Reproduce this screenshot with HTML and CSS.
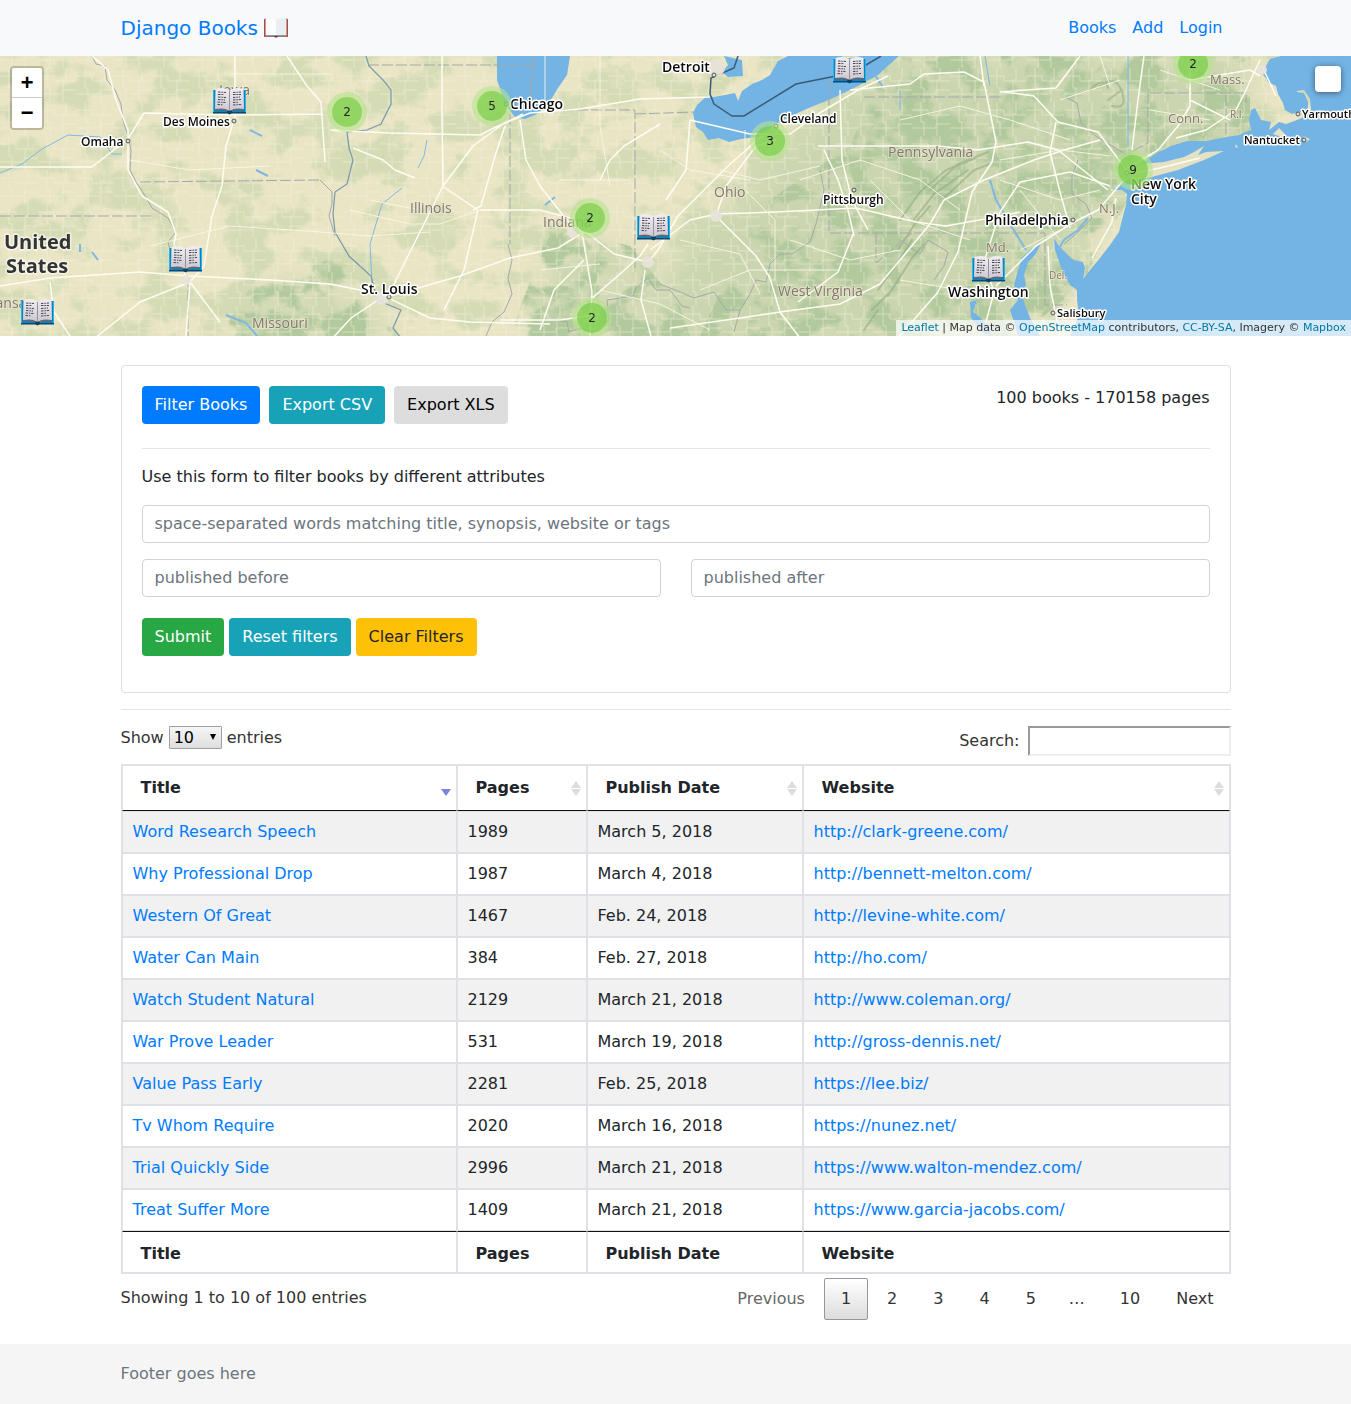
FILE: index.html
```html
<!DOCTYPE html>
<html lang="en">
<head>
<meta charset="utf-8">
<meta name="viewport" content="width=device-width, initial-scale=1">
<title>Django Books</title>
<link rel="stylesheet" href="styles.css">
</head>
<body>
<header class="navbar">
  <div class="container navbar-inner">
    <a class="brand" href="#">Django Books
      <svg class="brand-icon" viewBox="0 0 24 20" aria-hidden="true">
        <path d="M0 1h2v16h20V1h2v18H0z" fill="#c5413c"/>
        <path d="M1 17h22v1.500H1z" fill="#8b989b"/>
        <path d="M1.500 0C5 1 9 0 12 1.500V17H2z" fill="#fcfcfc"/>
        <path d="M22.500 0C19 1 15 0 12 1.500V17h10z" fill="#e9eef0"/>
        <path d="M1.500 0v17M22.500 0v17" stroke="#a5afb2" stroke-width=".8"/>
        <path d="M10 18h4l-1 1.500h-2z" fill="#3d4c52"/>
      </svg></a>
    <nav class="nav-links">
      <a href="#">Books</a>
      <a href="#">Add</a>
      <a href="#">Login</a>
    </nav>
  </div>
</header>

<section class="map" aria-label="Map of publishers">
  <svg class="map-canvas" viewBox="0 56 1351 280" preserveAspectRatio="xMidYMid slice">
    <defs>
      <filter id="patches" x="0" y="0" width="100%" height="100%" color-interpolation-filters="sRGB">
        <feTurbulence type="fractalNoise" baseFrequency="0.022 0.028" numOctaves="5" seed="8"/>
        <feColorMatrix values="0 0 0 0 .83  0 0 0 0 .86  0 0 0 0 .71  7 0 0 0 -3.300"/>
      </filter>
      <filter id="hills" x="0" y="0" width="100%" height="100%" color-interpolation-filters="sRGB">
        <feTurbulence type="fractalNoise" baseFrequency="0.03 0.035" numOctaves="5" seed="21" result="n"/>
        <feColorMatrix in="n" values="0 0 0 0 .7  0 0 0 0 .79  0 0 0 0 .62  0 7 0 0 -3.200" result="c"/>
        <feComposite in="c" in2="SourceGraphic" operator="in"/>
      </filter>
      <filter id="soft" x="-20%" y="-20%" width="140%" height="140%"><feGaussianBlur stdDeviation="14"/></filter>
      <pattern id="grid" width="38" height="34" patternUnits="userSpaceOnUse">
        <path d="M0 8h16v5h22M0 26h24v-4h14M9 0v20h3v14M28 0v12h-3v22" fill="none" stroke="#f6f2df" stroke-width="1"/>
      </pattern>
      <linearGradient id="page" x2="0" y2="1">
        <stop offset="0" stop-color="#f0eef3"/><stop offset="1" stop-color="#cdc9d3"/>
      </linearGradient>
      <symbol id="book" viewBox="0 0 33 26" overflow="visible">
        <path d="M0 2h4v20h25V2h4v23H0z" fill="#0b83be"/>
        <path d="M0 2h1v22H0zM32 2h1v22h-1z" fill="#2bb4e8"/>
        <path d="M0 24h33v1.500H0z" fill="#064974"/>
        <path d="M2 20.500c5-1 10-1 14.500 2 4.500-3 9.500-3 14.500-2v2c-5-.5-10-.5-14.500 1.500-4.500-2-9.500-2-14.500-1.500z" fill="#6c6470"/>
        <path d="M2.500 1C8-.5 13-.5 16.500 3v19.500C12 20 7 20 2 21z" fill="url(#page)"/>
        <path d="M30.500 1C25-.5 20-.5 16.500 3v19.500C21 20 26 20 31 21z" fill="url(#page)"/>
        <path d="M16.500 3v19" stroke="#97919d" stroke-width="1"/>
        <path d="M5 4l8 .5M5 6.500h6M5 9l8 .5M5 11.500l7 .5M4.500 14l8 .5M4.500 16.500l5 .3M20 4.500l8-.5M20 6.500h8M20 9.500l7-.5M20 12l8-.5M20 14.500l5-.3M20 17l8-.5" fill="none" stroke="#4a4650" stroke-width="1" stroke-dasharray="2.500 .9 1.500 .8"/>
        <path d="M14 23h5v2l-2.500 1.500L14 25z" fill="#054565"/>
      </symbol>
    </defs>

    <rect y="56" width="1351" height="280" fill="#eae5c5"/>
    <rect y="56" width="1351" height="280" filter="url(#patches)"/>
    <g fill="#cbd6b0" filter="url(#soft)">
      <path d="M790 136l90-80h370v110l-130 30-60 80-50 70H650l20-90 70-60z"/>
      <path d="M525 336l30-100 60 10 50 50v50z" opacity=".7"/>
      <path d="M220 336l60-60 90 20 30 50z" opacity=".7"/>
    </g>
    <g filter="url(#hills)">
      <path d="M700 336l60-130 90-60 40-90h360v110l-120 30-50 90-60 50zM510 336l40-110 80 20 50 60 10 30zM220 336l30-50 90-30 60 80z" fill="#000"/>
    </g>
    <rect y="56" width="1280" height="280" fill="url(#grid)" opacity=".5"/>

    <!-- ridges of the Appalachians -->
    <g fill="none" stroke="#96ad86" stroke-width="2" opacity=".65" stroke-linecap="round">
      <path d="M878 290l20-28 14-22M888 296l24-38 12-14M872 310l18-18M900 220l20-28 26-22 30-12M912 222l22-28 34-24M930 190l28-26 30-12M944 198l30-28 16-6M898 250l18-28 14-16M864 330l14-20M1100 86q16-12 22 6t-10 14M1090 90q14-14 18-2M1108 100l14-10"/>
    </g>

    <!-- water -->
    <g fill="#73b4e5">
      <path d="M497 56v24l5 15 6 13 7 9 10 2 10-4 10-7 7-10 6-10 9-13 3-19z"/>
      <path d="M693 113l4-8 10-9 7 1 11-2 10-2 3 8 4-10 10-7 10-4 8-5 8-14 12-6h50l6 4 20-4h34l-22 20-22 12-25 12-20 8-20 9-15 8-10 7-10 6-15 2-12 3-10-4-11 2-5-8-7-5z"/>
      <path d="M724 56l18 4 1 16-15 1-6-5 6-7z"/>
      <path d="M1281 56l-11 3-4 7-4 8 4 4 2 4 8 4 2 8 5 9 2 7 7 4 8-2 8-1v-9l-4-9-7-1v-1l7-1 6 9 1 11-5 6-9 4-11 4-7-2-10 8 2-8-10-2-6-12-4 2-2 10 2 10-12 5-18 3-15 3h-19l-16 5-12 6-10 6-8 6-4 11-10 5-8 6-6 4h9l5 4-1 11-4 15-3 12-9 13-10 13-10 12-7 9 2-11-2-6-10-2-8-8-7-7-4-7 1 12 7 20 8 15 7 5v10l2 15-4 10-5 11h292V56z"/>
      <path d="M1042 242l-12 8-8 8-4 12-4 15 4 15-8 10 5 15 3 11h22l-10-18-5-13-3-10 4-10-2-10 4-13 7-7z"/>
      <path d="M977 300l-4 12 8 6 6 10 8-2-6 8h-4l-14-16-1-16z"/>
    </g>
    <g fill="#e4e2c2">
      <path d="M1128 172l12-8 24-2 20-5 10-5 10-6-6 9 8-3 18-1-20 9-26 10-30 8-14 1z"/>
      <path d="M1273 134l6-6 6 6-4 3zM1303 136l7 3-4 3zM1236 144l2 4-3-1z"/>
    </g>
    <g fill="none" stroke="#7fb8e0" stroke-width="1">
      <path d="M0 173l22-9 20-15 26-14 32 2 12 17 10 0M427 140l-3 16-6 12M402 188l-20 16-12 40 2 40 6 12M1128 56v90M985 56l5 30M900 90v20"/>
      <path d="M1058 250l6-10 14-10 10-12M875 75l8 12M250 130l12 6M256 170l12 6M80 244v8M92 252l6 8M545 205l10-8M226 315l20 8 12 14M990 180l6 20 14 24 16 26" stroke-width="2"/>
    </g>

    <!-- country and state borders -->
    <g fill="none" stroke="#a3a9a8" stroke-width="1">
      <g stroke-dasharray="11 3">
        <path d="M0 216h154M140 182l180-2M368 65h165M188 276v60M510 114v130M563 110h72v158M635 114l60-2M829 80v153h216v72h22M864 97h140M876 233v30l36-30M1150 93h96v10M1148 93v50l-26 14M1226 95v40"/>
      </g>
      <path d="M92 56l4 8 9 2 2 14 8 10 6 14 2 16 5 16 3 14-1 20 6 12 8 12 8 14 16 10 8 14-8 10 2 8M320 180l12 12 0 12-3 12 6 20M508 244l4 16-4 18 4 16-8 18-12 10-6 14M555 320l12 2 2 10 12-4 12 4 16-12-2-20 26-4 3-8 12-10 8 12 14 0 12 16 8 2M660 284l20 8 14 6 20-6 12 18 14 0 10-16 6-14 10 2 4-18 10-10 12 0 18-12 6-18 8-34-4-20M740 310l-6 22M900 240l20 14 8-14M928 240l20 12-4 14-10 14M1065 97l12 6 4 20 16 14 30 18M1078 160l-6 16 0 18 14 10 6 14-16 16-12 10M534 56l-4 40"/>
    </g>
    <path d="M738 56l-4 12-14 6-9 4-1 16 4 10 18 12h12l52-32 40-8M866 65l15-9" fill="none" stroke="#3d5a75" stroke-width="1.500"/>
    <path d="M366 56l3 10 14 14 8 10 0 14-10 20-14 6-20 2 2 16 4 12-6 24-12 8-2 22 2 18 14 24 22 20 6 24 24 10-8 18 16 20" fill="none" stroke="#7799ac" stroke-width="1.200"/>

    <!-- motorways -->
    <g fill="none" stroke="#fffdf2" stroke-width="1.500" stroke-linejoin="round">
      <path d="M0 167h92l36-28 16-26 90 2 88-1M92 56l16 14 8 30 12 30 0 40 14 26 26 16 8 22-2 10 14 38M235 56v60l-9 30-4 40-10 30-8 50-16 18M287 56l20 30 14 16 4 60M0 286l50-8 90-6 50 4 80 4 60 4 50 10 50 24 40 4 80 2M50 282l4 30 20 30M190 282l-50 20-50 40M190 282l30 40M190 282l-4 54"/>
      <path d="M442 56v60l1 70-30 60-20 40-12 12-30 20-20 22M442 186l36 24-14 60-20 40M390 296l70-20 50-18 48-10 32-20M505 126l-10 30-14 50-8 4M443 186l30-40 30-22 20-10M330 130l60 3 90 2 20-10 30-12 50-4 60-10 70-2M480 210l60 0 30 8 14 10M520 120l6 40 14 26 30 38 12 8 10 60-2 44M590 300l30-26 20-18 8-12M600 180l10-20 14-14 36-22M584 230l30 24 34 8 10-12 20-34 50-50 34-30M500 320h60l40-6M415 178l-20-8-12-10-30-12M540 330l14-40 30-30"/>
      <path d="M645 270l-4 30 10 36M650 250l40-30 26-6 60-2 80-4 60 14 30 4 44-8 30-6M716 216l10-30 30-40 20-6M690 120l-4 50-20 30M690 120l60 14 40 0 28-20 40-24 30-14M716 216l40 40 14 22 10 34 60-8 40-20 50-60 14-24 40-20 50-20 30-10 36-10M780 312l-40 6-70 10M780 312l20 26M854 232l-16 40-40 30M824 150l14 30 10 30 6 26M840 90l2 70 10 40 16 30M818 146h120l40 4 50-8 30 8 50 40M850 90l60-6 14-10 40-2 20 10 12 60-4 20-20 30-14 60-20 40-40 46M980 56l4 30"/>
      <path d="M1122 182l-10 12-14 16-24 12-16 10-22 14-40 40M1128 172l-30-40-40-10-24-26-30-4M1128 168l30-18 20-24 12-20 0-40M1190 80l60-10 10 6M1190 100l40 20M1132 150l6-50 6-44M1110 186l-40-14-50 10-20 30-16 50 10 30-8 30M1056 122l-6 30 10 40 10 36M1260 60l-14 30-10 20-30 20-30 8M1262 66l14 30M1130 174l30-6 40-10M1116 198l-4 24-20 36M1000 92l56-4 24-32M1048 246l2 40 10 50"/>
    </g>
    <g fill="none" stroke="#fbf8e8" stroke-width="1" opacity=".85">
      <path d="M230 74h100M130 160l60 10 80-4M150 246l80-20 90 6 50 4 60-4M420 210l-50-10M350 210l60 14 30 0 40-14M545 56l0 60M600 56v70l10 60M560 180h70M540 270l60-6M660 150l30 20 60 10M680 240l60 14 20 40M720 170l40 10 60-14M745 130v60l30 30 0 60M800 180l60-20 60 20 40 30M870 180l40 40 60 20M900 120l60-14 50 14 60 20M1000 180l60 20 40-10M1000 160l60-10 50 6M1020 250l40-20M1020 190l40 50M900 280l60 10M1060 100l60-20M1150 110l60 10M1160 70l60 20M1100 56l10 30M790 240l60 20 50-10M700 290l50-20 90 0M600 290l60 14 50 26"/>
    </g>
    <g fill="#e8e3da" opacity=".9">
      <circle cx="716" cy="68" r="9"/><circle cx="716" cy="216" r="6"/><circle cx="573" cy="232" r="6"/><circle cx="648" cy="262" r="6"/><circle cx="382" cy="298" r="7"/><circle cx="186" cy="280" r="5"/><circle cx="1262" cy="70" r="5"/>
    </g>

    <g class="state-label">
      <text x="219" y="95">Iowa</text>
      <text x="410" y="213">Illinois</text>
      <text x="543" y="227">Indiana</text>
      <text x="714" y="197">Ohio</text>
      <text x="888" y="157">Pennsylvania</text>
      <text x="778" y="296">West Virginia</text>
      <text x="252" y="328">Missouri</text>
      <text x="-13" y="308">Kansas</text>
      <text class="md" x="1210" y="84">Mass.</text>
      <text class="md" x="1168" y="123">Conn.</text>
      <text class="md" x="1099" y="213">N.J.</text>
      <text class="md" x="986" y="252">Md.</text>
      <text class="sm" x="1230" y="118">R.I.</text>
      <text class="sm" x="1049" y="279">Del.</text>
    </g>
    <g class="city-dot">
      <circle cx="128" cy="141" r="2"/><circle cx="234" cy="121" r="2"/><circle cx="389" cy="297" r="2"/><circle cx="506" cy="104" r="2"/><circle cx="714" cy="75" r="2"/><circle cx="776" cy="126" r="2"/><circle cx="854" cy="190" r="2"/><circle cx="1073" cy="220" r="2"/><circle cx="1127" cy="173" r="2"/><circle cx="1053" cy="313" r="2"/><circle cx="1298" cy="114" r="2"/><circle cx="1304" cy="140" r="2"/>
    </g>
    <g class="city-label">
      <text class="country" x="4" y="249">United</text>
      <text class="country" x="6" y="273">States</text>
      <text x="81" y="146">Omaha</text>
      <text x="163" y="126">Des Moines</text>
      <text x="780" y="123">Cleveland</text>
      <text x="823" y="204">Pittsburgh</text>
      <text class="lg" x="361" y="294">St. Louis</text>
      <text class="lg" x="510" y="109">Chicago</text>
      <text class="lg" x="662" y="72">Detroit</text>
      <text class="lg" x="948" y="297">Washington</text>
      <text class="lg" x="985" y="225">Philadelphia</text>
      <text class="lg" x="1131" y="189">New York</text>
      <text class="lg" x="1131" y="204">City</text>
      <text class="xs" x="1244" y="144">Nantucket</text>
      <text class="xs" x="1302" y="118">Yarmouth</text>
      <text class="xs" x="1057" y="317">Salisbury</text>
    </g>

    <g>
      <use href="#book" x="213" y="88" width="33" height="26"/>
      <use href="#book" x="169" y="246" width="33" height="26"/>
      <use href="#book" x="21" y="299" width="33" height="26"/>
      <use href="#book" x="637" y="214" width="33" height="26"/>
      <use href="#book" x="833" y="57" width="33" height="26"/>
      <use href="#book" x="972" y="256" width="33" height="26"/>
    </g>
    <g class="cluster">
      <circle class="halo" cx="347" cy="112" r="20"/><circle cx="347" cy="112" r="15"/><text x="347" y="116">2</text>
      <circle class="halo" cx="492" cy="106" r="20"/><circle cx="492" cy="106" r="15"/><text x="492" y="110">5</text>
      <circle class="halo" cx="590" cy="218" r="20"/><circle cx="590" cy="218" r="15"/><text x="590" y="222">2</text>
      <circle class="halo" cx="592" cy="318" r="20"/><circle cx="592" cy="318" r="15"/><text x="592" y="322">2</text>
      <circle class="halo" cx="770" cy="141" r="20"/><circle cx="770" cy="141" r="15"/><text x="770" y="145">3</text>
      <circle class="halo" cx="1133" cy="170" r="20"/><circle cx="1133" cy="170" r="15"/><text x="1133" y="174">9</text>
      <circle class="halo" cx="1193" cy="64" r="20"/><circle cx="1193" cy="64" r="15"/><text x="1193" y="68">2</text>
    </g>
  </svg>
  <div class="zoom-control">
    <button type="button" aria-label="Zoom in">+</button>
    <button type="button" aria-label="Zoom out">−</button>
  </div>
  <button class="layer-control" type="button" aria-label="Layers"></button>
  <div class="attribution"><a href="#">Leaflet</a> | Map data © <a href="#">OpenStreetMap</a> contributors, <a href="#">CC-BY-SA</a>, Imagery © <a href="#">Mapbox</a></div>
</section>

<main class="container">
  <section class="card">
    <div class="card-head">
      <div class="actions">
        <button class="btn primary" type="button">Filter Books</button>
        <a class="btn info" href="#">Export CSV</a>
        <a class="btn plain" href="#">Export XLS</a>
      </div>
      <span>100 books - 170158 pages</span>
    </div>
    <form class="filter-form">
      <p>Use this form to filter books by different attributes</p>
      <input class="field" type="text" aria-label="Search words" placeholder="space-separated words matching title, synopsis, website or tags">
      <div class="field-row">
        <input class="field" type="text" aria-label="Published before" placeholder="published before">
        <input class="field" type="text" aria-label="Published after" placeholder="published after">
      </div>
      <div class="form-actions">
        <button class="btn success" type="submit">Submit</button>
        <button class="btn info" type="reset">Reset filters</button>
        <a class="btn warning" href="#">Clear Filters</a>
      </div>
    </form>
  </section>

  <section class="listing">
    <div class="table-tools">
      <label class="length">Show
        <span class="select"><select><option>10</option><option>25</option><option>50</option></select></span>
        entries</label>
      <label class="search">Search: <input type="search"></label>
    </div>
    <table class="books">
      <colgroup><col class="c-title"><col class="c-pages"><col class="c-date"><col></colgroup>
      <thead>
        <tr><th class="desc">Title</th><th class="sortable">Pages</th><th class="sortable">Publish Date</th><th class="sortable">Website</th></tr>
      </thead>
      <tbody>
        <tr><td><a href="#">Word Research Speech</a></td><td>1989</td><td>March 5, 2018</td><td><a href="#">http://clark-greene.com/</a></td></tr>
        <tr><td><a href="#">Why Professional Drop</a></td><td>1987</td><td>March 4, 2018</td><td><a href="#">http://bennett-melton.com/</a></td></tr>
        <tr><td><a href="#">Western Of Great</a></td><td>1467</td><td>Feb. 24, 2018</td><td><a href="#">http://levine-white.com/</a></td></tr>
        <tr><td><a href="#">Water Can Main</a></td><td>384</td><td>Feb. 27, 2018</td><td><a href="#">http://ho.com/</a></td></tr>
        <tr><td><a href="#">Watch Student Natural</a></td><td>2129</td><td>March 21, 2018</td><td><a href="#">http://www.coleman.org/</a></td></tr>
        <tr><td><a href="#">War Prove Leader</a></td><td>531</td><td>March 19, 2018</td><td><a href="#">http://gross-dennis.net/</a></td></tr>
        <tr><td><a href="#">Value Pass Early</a></td><td>2281</td><td>Feb. 25, 2018</td><td><a href="#">https://lee.biz/</a></td></tr>
        <tr><td><a href="#">Tv Whom Require</a></td><td>2020</td><td>March 16, 2018</td><td><a href="#">https://nunez.net/</a></td></tr>
        <tr><td><a href="#">Trial Quickly Side</a></td><td>2996</td><td>March 21, 2018</td><td><a href="#">https://www.walton-mendez.com/</a></td></tr>
        <tr><td><a href="#">Treat Suffer More</a></td><td>1409</td><td>March 21, 2018</td><td><a href="#">https://www.garcia-jacobs.com/</a></td></tr>
      </tbody>
      <tfoot>
        <tr><th>Title</th><th>Pages</th><th>Publish Date</th><th>Website</th></tr>
      </tfoot>
    </table>
    <div class="table-foot">
      <div class="table-info">Showing 1 to 10 of 100 entries</div>
      <nav class="pager" aria-label="Pagination">
        <a class="disabled" href="#">Previous</a>
        <a class="current" href="#">1</a>
        <a href="#">2</a>
        <a href="#">3</a>
        <a href="#">4</a>
        <a href="#">5</a>
        <span>…</span>
        <a href="#">10</a>
        <a href="#">Next</a>
      </nav>
    </div>
  </section>
</main>

<footer class="footer">
  <div class="container">Footer goes here</div>
</footer>
</body>
</html>
```
FILE: styles.css
```css
*, *::before, *::after { box-sizing: border-box; }

body {
  margin: 0;
  min-height: 100vh;
  display: flex;
  flex-direction: column;
  background: #fff;
  color: #212529;
  font: 16px/24px "DejaVu Sans", sans-serif;
}

a { color: #007bff; text-decoration: none; }
button, input, select { font: inherit; margin: 0; }

.container { width: 100%; max-width: 1110px; margin: 0 auto; }

/* navigation */
.navbar { background: #f8f9fa; }
.navbar-inner { display: flex; justify-content: space-between; align-items: center; height: 56px; }
.brand { display: flex; align-items: center; gap: 6px; font-size: 20px; line-height: 30px; }
.brand-icon { width: 24px; height: 20px; }
.nav-links { display: flex; }
.nav-links a { padding: 8px; }

/* map */
.map { position: relative; height: 280px; overflow: hidden; background: #eae5c5; }
.map-canvas { display: block; width: 100%; height: 100%; font-family: "Open Sans", "Noto Sans", sans-serif; }
.state-label { fill: #85766f; font-size: 14px; stroke: #eeebd5; stroke-opacity: .6; stroke-width: 2px; paint-order: stroke; }
.state-label .md { font-size: 13px; }
.state-label .sm { font-size: 10px; }
.city-label { fill: #0b0b0b; font-size: 12px; font-weight: 600; stroke: #fff; stroke-width: 3px; stroke-linejoin: round; paint-order: stroke; }
.city-label .lg { font-size: 14px; }
.city-label .xs { font-size: 11px; }
.city-label .country { fill: #333; font-size: 20px; font-weight: 700; stroke-opacity: .6; }
.city-dot { fill: #ddd; stroke: #555; stroke-width: 1px; }
.cluster { fill: #6ecc39; fill-opacity: .6; }
.cluster .halo { fill: #b5e28c; }
.cluster text { fill: #212529; fill-opacity: 1; font: 12px "DejaVu Sans", sans-serif; text-anchor: middle; }

.zoom-control {
  position: absolute;
  top: 10px;
  left: 10px;
  display: flex;
  flex-direction: column;
  border: 2px solid rgba(0, 0, 0, .2);
  border-radius: 4px;
}
.zoom-control button {
  width: 30px;
  height: 30px;
  padding: 4px 0 0;
  border: 0;
  background: #fff;
  color: #000;
  font: bold 22px/26px "Liberation Mono", monospace;
}
.zoom-control button:first-child { border-bottom: 1px solid #ccc; border-radius: 2px 2px 0 0; }
.zoom-control button:last-child { border-radius: 0 0 2px 2px; }
.layer-control {
  position: absolute;
  top: 10px;
  right: 10px;
  width: 26px;
  height: 26px;
  border: 0;
  border-radius: 4px;
  background: #fff;
  box-shadow: 0 1px 6px rgba(0, 0, 0, .5);
}
.attribution {
  position: absolute;
  right: 0;
  bottom: 0;
  padding: 0 5px;
  background: rgba(255, 255, 255, .7);
  color: #333;
  font-size: 11px;
  line-height: 16px;
}
.attribution a { color: #0078a8; }

/* filter card */
.card { margin-top: 29px; padding: 20px 20px 36px; border: 1px solid #dfdfdf; border-radius: 4px; }
.card-head { display: flex; justify-content: space-between; padding-bottom: 24px; border-bottom: 1px solid #e5e5e5; }
.actions { display: flex; gap: 9px; }
.btn {
  height: 38px;
  padding: 6px 12px;
  border: 1px solid transparent;
  border-radius: 4px;
  color: #fff;
  line-height: 24px;
}
.primary { background: #007bff; }
.info { background: #17a2b8; }
.success { background: #28a745; }
.plain { background: #ddd; color: #000; }
.warning { background: #ffc107; color: #212529; }
.filter-form { display: flex; flex-direction: column; gap: 16px; padding-top: 16px; }
.filter-form p { margin: 0; }
.field {
  width: 100%;
  height: 38px;
  padding: 5px 12px 7px;
  border: 1px solid #ced4da;
  border-radius: 4px;
  background: #fff;
}
.field::placeholder { color: #6c757d; opacity: 1; }
.field-row { display: grid; grid-template-columns: 1fr 1fr; gap: 30px; }
.form-actions { display: flex; gap: 5px; padding-top: 5px; }

/* listing */
.listing { margin-top: 16px; padding: 16px 0 24px; border-top: 1px solid #e5e5e5; color: #333; }
.table-tools { display: flex; justify-content: space-between; align-items: flex-start; padding-bottom: 8px; }
.length { display: flex; align-items: flex-start; gap: 5px; }
.select { position: relative; display: flex; }
.select select {
  appearance: none;
  width: 53px;
  height: 23px;
  padding: 1px 4px 0;
  border: 1px solid #a0a0a0;
  border-radius: 1px;
  background: linear-gradient(#f6f6f6, #dedede);
  color: #000;
  line-height: 20px;
}
.select::after {
  content: "";
  position: absolute;
  top: 8px;
  right: 6px;
  border: solid transparent;
  border-width: 6px 3px 0;
  border-top-color: #000;
}
.search { display: flex; align-items: center; gap: 8px; }
.search input { width: 203px; height: 30px; padding: 1px; border: 2px solid; border-color: #9a9a9a #eee #eee #9a9a9a; background: #fff; }

.books {
  width: 100%;
  table-layout: fixed;
  border: 1px solid #dee2e6;
  border-collapse: separate;
  border-spacing: 0;
  color: #212529;
}
.c-title { width: 335px; }
.c-pages { width: 130px; }
.c-date { width: 216px; }
.books td { padding: 8px 10px; border: 1px solid #dee2e6; }
.books tbody tr:nth-child(odd) { background: #f1f1f1; }
.books th { position: relative; border: 1px solid #dee2e6; text-align: left; font-weight: 700; }
.books thead th { padding: 10px 18px; border-bottom-color: #111; }
.books tfoot th { padding: 10px 18px 6px; border-top-color: #111; }
.sortable::before, .sortable::after, .desc::after {
  content: "";
  position: absolute;
  right: 5px;
  border: solid transparent;
}
.sortable::before { top: 15px; border-width: 0 5px 7px; border-bottom-color: #dcdcdc; }
.sortable::after { top: 23px; border-width: 7px 5px 0; border-top-color: #dcdcdc; }
.desc::after { top: 23px; border-width: 7px 5px 0; border-top-color: #7a83df; }

.table-foot { display: flex; justify-content: space-between; align-items: flex-start; padding-top: 4px; }
.table-info { padding-top: 8px; }
.pager { display: flex; gap: 2px; }
.pager a { padding: 8px 16px; border: 1px solid transparent; border-radius: 2px; color: #333; }
.pager span { margin-left: -2px; padding: 9px 16px; }
.pager .disabled { color: #666; }
.pager .current { border-color: #979797; background: linear-gradient(#fff, #dcdcdc); }

.footer { margin-top: auto; background: #f5f5f5; color: #6c757d; line-height: 60px; }
```
